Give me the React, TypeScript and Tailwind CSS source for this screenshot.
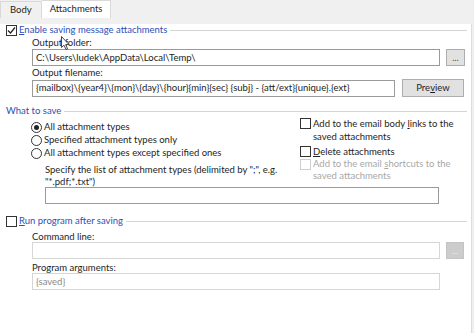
import React from "react";

const font = { fontFamily: "Lato, 'Noto Sans', sans-serif" };

const CheckBox: React.FC<{ checked?: boolean; disabled?: boolean }> = ({ checked, disabled }) => (
  <span
    className={
      "inline-flex w-[11px] h-[11px] shrink-0 items-center justify-center border bg-white " +
      (disabled ? "border-[#cfcfcf]" : "border-[#333333]")
    }
  >
    {checked && (
      <svg width="9" height="9" viewBox="0 0 9 9">
        <path d="M1 4.5 L3.5 7 L8 1.5" fill="none" stroke="#222" strokeWidth="1.2" />
      </svg>
    )}
  </span>
);

const Radio: React.FC<{ checked?: boolean }> = ({ checked }) => (
  <span className="inline-flex w-[11px] h-[11px] shrink-0 items-center justify-center rounded-full border border-[#333333] bg-white">
    {checked && <span className="w-[5px] h-[5px] rounded-full bg-[#222]" />}
  </span>
);

const GroupHeader: React.FC<{ children: React.ReactNode; check?: boolean; checked?: boolean; mt: string }> = ({
  children,
  check,
  checked,
  mt,
}) => (
  <div className={"flex items-center h-[12px] pl-[6px] pr-[4px] " + mt}>
    {check && <CheckBox checked={checked} />}
    <span className={"text-[#2d4fb8] leading-[12px] whitespace-nowrap " + (check ? "ml-[2px]" : "")}>{children}</span>
    <span className="flex-1 h-px bg-[#d4d4d4] ml-[3px]" />
  </div>
);

const Input: React.FC<{ w: string; value?: string; disabled?: boolean; muted?: boolean }> = ({ w, value, disabled, muted }) => (
  <div
    className={
      "h-[17px] border bg-white px-[3px] flex items-center leading-[12px] whitespace-nowrap overflow-hidden " +
      w +
      (disabled ? " border-[#d6d6d6]" : " border-[#9a9a9a]") +
      (muted ? " text-[#8a8a8a]" : " text-[#222]")
    }
  >
    {value}
  </div>
);

export default function App() {
  return (
    <div className="relative w-[474px] h-[333px] bg-[#f0f0f0] overflow-hidden text-[9.5px] text-[#1e1e1e]" style={font}>
      {/* tabs */}
      <div className="flex items-end h-[18px]">
        <div className="h-[17px] px-[9px] flex items-center border border-b-0 border-[#d9d9d9] bg-[#f0f0f0]">Body</div>
        <div className="h-[18px] px-[8px] flex items-center border border-b-0 border-l-0 border-[#d9d9d9] bg-white">
          Attachments
        </div>
      </div>

      {/* page */}
      <div className="w-[472px] h-[313px] bg-white border-r border-b border-[#dcdcdc]">
        <GroupHeader check checked mt="mt-[6px]">
          <span className="underline">E</span>nable saving message attachments
        </GroupHeader>

        <div className="pl-[32px]">
          <div className="mt-[1px] h-[12px] leading-[12px]">Output folder:</div>
          <div className="flex items-center">
            <Input w="w-[408px]" value="C:\Users\ludek\AppData\Local\Temp\" />
            <div className="ml-[6px] w-[19px] h-[17px] border border-[#adadad] bg-[#e1e1e1] flex items-center justify-center text-[#555] leading-none">
              ...
            </div>
          </div>
          <div className="mt-[1px] h-[12px] leading-[12px]">Output filename:</div>
          <div className="flex items-center">
            <Input w="w-[363px]" value="{mailbox}\{year4}\{mon}\{day}\{hour}{min}{sec} {subj} - {att/ext}{unique}.{ext}" />
            <div className="ml-[7px] w-[62px] h-[18px] border border-[#adadad] bg-[#e1e1e1] flex items-center justify-center">
              Pre<span className="underline">v</span>iew
            </div>
          </div>
        </div>

        <GroupHeader mt="mt-[8px]">What to save</GroupHeader>

        <div className="flex">
          <div className="pl-[31px] w-[300px]">
            <div className="mt-[4px] h-[13px] flex items-center gap-[2px]">
              <Radio checked />
              <span>All attachment types</span>
            </div>
            <div className="h-[13px] flex items-center gap-[2px]">
              <Radio />
              <span>Specified attachment types only</span>
            </div>
            <div className="h-[13px] flex items-center gap-[2px]">
              <Radio />
              <span>All attachment types except specified ones</span>
            </div>
            <div className="pl-[14px]">
              <div className="mt-[4px] leading-[11.5px] whitespace-nowrap">
                Specify the list of attachment types (delimited by ";", e.g.
                <br />
                "*.pdf;*.txt")
              </div>
              <div>
                <Input w="w-[394px]" />
              </div>
            </div>
          </div>
          <div className="flex flex-col relative z-10">
            <div className="flex items-start gap-[2px] leading-[13px]">
              <span className="mt-[1px]">
                <CheckBox />
              </span>
              <span className="whitespace-nowrap">
                Add to the email body <span className="underline">l</span>inks to the
                <br />
                saved attachments
              </span>
            </div>
            <div className="mt-[2px] flex items-center gap-[2px] leading-[13px]">
              <CheckBox />
              <span>
                <span className="underline">D</span>elete attachments
              </span>
            </div>
            <div className="flex items-start gap-[2px] leading-[12px] text-[#a8a8a8]">
              <span className="mt-[1px]">
                <CheckBox disabled />
              </span>
              <span className="whitespace-nowrap">
                Add to the email <span className="underline">s</span>hortcuts to the
                <br />
                saved attachments
              </span>
            </div>
          </div>
        </div>

        <GroupHeader check mt="mt-[11px]">
          <span className="underline">R</span>un program after saving
        </GroupHeader>

        <div className="pl-[32px]">
          <div className="mt-[4px] h-[11px] leading-[11px]">Command line:</div>
          <div className="flex items-center">
            <Input w="w-[408px]" disabled />
            <div className="ml-[6px] w-[18px] h-[17px] bg-[#cccccc] border border-[#c4c4c4] flex items-center justify-center text-[#e8e8e8] leading-none">
              ...
            </div>
          </div>
          <div className="mt-[3px] h-[11px] leading-[11px]">Program arguments:</div>
          <Input w="w-[408px]" value="{saved}" disabled muted />
        </div>
      </div>

      {/* mouse cursor */}
      <svg className="absolute left-[61px] top-[36px]" width="10" height="15" viewBox="0 0 10 15">
        <path d="M0.5 0.5 L0.5 11.5 L3 9.2 L5 13.5 L6.6 12.8 L4.7 8.6 L8 8.6 Z" fill="#fff" stroke="#333" strokeWidth="0.9" />
      </svg>
    </div>
  );
}
